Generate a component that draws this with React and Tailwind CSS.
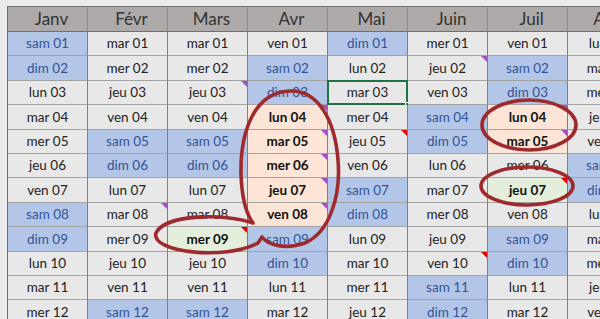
import React from "react";

const months = ["Janv", "Févr", "Mars", "Avr", "Mai", "Juin", "Juil", "Août"];
const days = ["dim", "lun", "mar", "mer", "jeu", "ven", "sam"];

const peach = new Set(["3-4", "3-5", "3-6", "3-7", "3-8", "6-4", "6-5"]);
const green = new Set(["2-9", "6-7"]);
const purple = new Set(["2-3", "3-4", "3-5", "3-6", "3-7", "3-8", "1-8", "5-2", "6-4", "6-5"]);
const red = new Set(["4-5", "6-7", "2-9", "5-10"]);

function Cell({ m, d }) {
  const key = `${m}-${d}`;
  const dow = new Date(2022, m, d).getDay();
  const weekend = dow === 0 || dow === 6;
  const label = `${days[dow]} ${String(d).padStart(2, "0")}`;
  let cls = "bg-[#e8e8e8] text-[#222222]";
  if (weekend) cls = "bg-[#b4c6e7] text-[#2f5597]";
  if (peach.has(key)) cls = "bg-[#fce4d6] text-[#111111] font-bold";
  if (green.has(key)) cls = "bg-[#e3efda] text-[#111111] font-bold";
  return (
    <div
      className={`relative flex items-center justify-center border-r border-b border-r-[#7f7f7f] border-b-[#a3a3a3] text-[13.5px] leading-none ${cls}`}
    >
      <span className="pt-px">{label}</span>
      {purple.has(key) && (
        <div className="absolute top-0 right-0 w-0 h-0 border-l-[6px] border-l-transparent border-t-[6px] border-t-[#a64dc9]" />
      )}
      {red.has(key) && (
        <div className="absolute top-0 right-0 w-0 h-0 border-l-[6px] border-l-transparent border-t-[6px] border-t-[#e00000]" />
      )}
      {key === "4-3" && (
        <>
          <div className="absolute -top-px -left-px -right-px -bottom-px border-2 border-[#217346]" />
          <div className="absolute -bottom-[3px] -right-[3px] w-[5px] h-[5px] bg-[#217346] border border-white" />
        </>
      )}
    </div>
  );
}

export default function App() {
  const rows = Array.from({ length: 12 }, (_, i) => i + 1);
  return (
    <div
      className="relative w-[600px] h-[319px] overflow-hidden bg-[#ebebeb] pt-[6px] pl-[7px]"
      style={{ fontFamily: "Lato, 'Noto Sans', 'Liberation Sans', sans-serif" }}
    >
      <div className="grid grid-cols-[repeat(8,80px)] grid-rows-[25px_repeat(12,24.4px)] border-l border-t border-l-[#6f6f6f] border-t-[#6f6f6f] w-[641px]">
        {months.map((mo) => (
          <div
            key={mo}
            className="flex items-center justify-center pl-2 bg-[#aeaaaa] text-[#333333] text-[17px] border-r border-b border-r-[#8a8a8a] border-b-[#6f6f6f]"
          >
            {mo}
          </div>
        ))}
        {rows.map((d) => months.map((_, m) => <Cell key={`${m}-${d}`} m={m} d={d} />))}
      </div>
      <svg
        className="absolute inset-0 pointer-events-none"
        width="600"
        height="319"
        viewBox="0 0 600 319"
      >
        <g fill="none" stroke="#9e2a2e" strokeWidth="3.6" strokeLinejoin="round" strokeLinecap="round">
          <path d="M 253 223 C 225 213, 165 214, 156 233 C 150 252, 225 261, 258 243 L 262 237 C 268 245, 285 250, 305 243 C 330 232, 341 195, 338 160 C 335 120, 318 90, 290 91 C 255 92, 240 130, 241 175 C 242 200, 247 215, 253 223" />
          <ellipse cx="529" cy="125" rx="47" ry="25" />
          <ellipse cx="527" cy="186" rx="46" ry="19" />
        </g>
      </svg>
    </div>
  );
}
